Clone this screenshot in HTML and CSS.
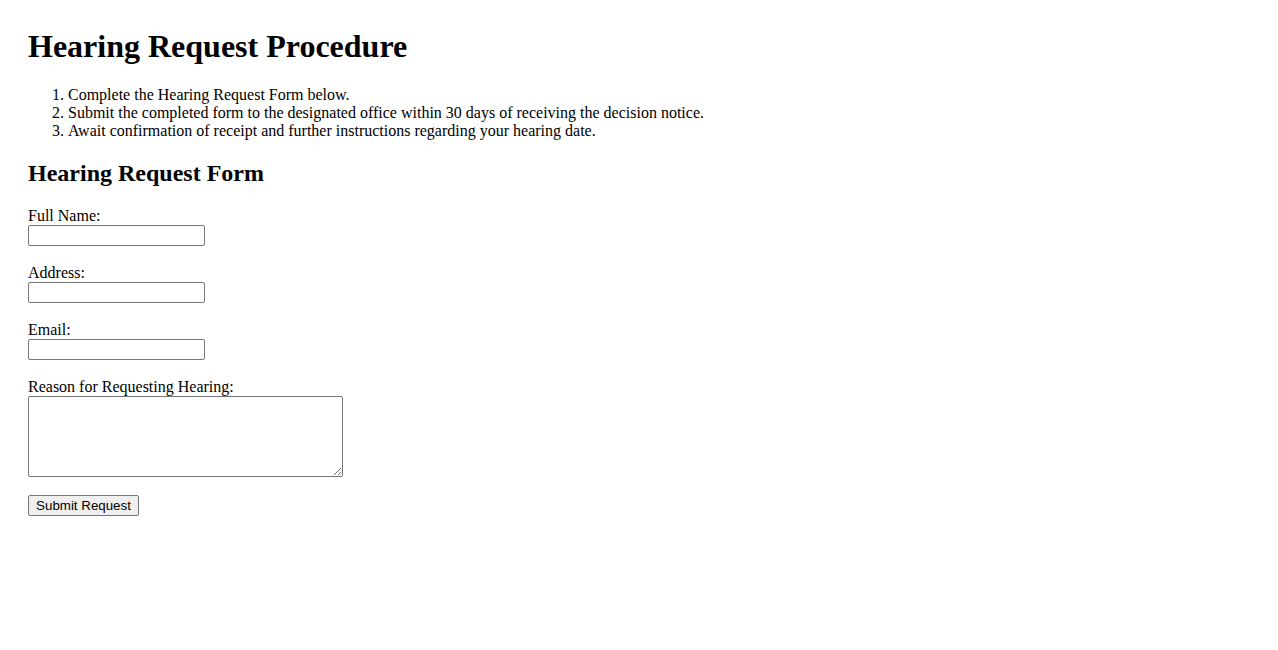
FILE: index.html
```html
<!DOCTYPE html>
<html lang="en">
<head>
<meta charset="utf-8">
<title>Hearing Request Procedure</title>
<link rel="stylesheet" href="styles.css">
</head>
<body>
<h1 class="title">Hearing Request Procedure</h1>
<ol class="steps">
  <li>Complete the Hearing Request Form below.</li>
  <li>Submit the completed form to the designated office within 30 days of receiving the decision notice.</li>
  <li>Await confirmation of receipt and further instructions regarding your hearing date.</li>
</ol>
<h2 class="subtitle">Hearing Request Form</h2>
<form class="form">
  <div class="field">
    <label class="label" for="name">Full Name:</label>
    <input class="input" type="text" id="name">
  </div>
  <div class="field">
    <label class="label" for="address">Address:</label>
    <input class="input" type="text" id="address">
  </div>
  <div class="field">
    <label class="label" for="email">Email:</label>
    <input class="input" type="email" id="email">
  </div>
  <div class="field">
    <label class="label" for="reason">Reason for Requesting Hearing:</label>
    <textarea class="textarea" id="reason"></textarea>
  </div>
  <button class="button" type="submit">Submit Request</button>
</form>
</body>
</html>
```

FILE: styles.css
```css
html, body {
  background: #ffffff;
}
body {
  margin: 0;
  padding: 28px;
  font-family: "Liberation Serif", "Times New Roman", serif;
  font-size: 16px;
  color: #000000;
}
.title {
  margin: 0 0 21.44px 0;
  font-size: 32px;
  font-weight: bold;
  line-height: 37px;
}
.steps {
  margin: 0;
  padding-left: 40px;
  line-height: 18px;
}
.subtitle {
  margin: 19px 0 20px 0;
  font-size: 24px;
  font-weight: bold;
  line-height: 28px;
}
.form {
  display: flex;
  flex-direction: column;
  align-items: flex-start;
}
.field {
  display: flex;
  flex-direction: column;
  align-items: flex-start;
  margin-bottom: 18px;
}
.label {
  line-height: 18px;
  height: 18px;
}
.input {
  box-sizing: border-box;
  width: 177px;
  height: 21px;
  margin: 0;
  padding: 1px 2px;
  border: 1px solid #767676;
  border-radius: 2px;
  font-family: "Liberation Sans", Arial, sans-serif;
  font-size: 13.33px;
  background: #ffffff;
}
.textarea {
  box-sizing: border-box;
  width: 315px;
  height: 81px;
  margin: 0;
  padding: 2px;
  border: 1px solid #767676;
  border-radius: 2px;
  font-family: "Liberation Mono", monospace;
  font-size: 13.33px;
  background: #ffffff;
}
.button {
  box-sizing: border-box;
  height: 21px;
  width: 111px;
  margin: 0;
  padding: 1px 6px;
  border: 1px solid #767676;
  border-radius: 2px;
  background: #efefef;
  color: #000000;
  font-family: "Liberation Sans", Arial, sans-serif;
  font-size: 13.33px;
  line-height: 15px;
}
```
